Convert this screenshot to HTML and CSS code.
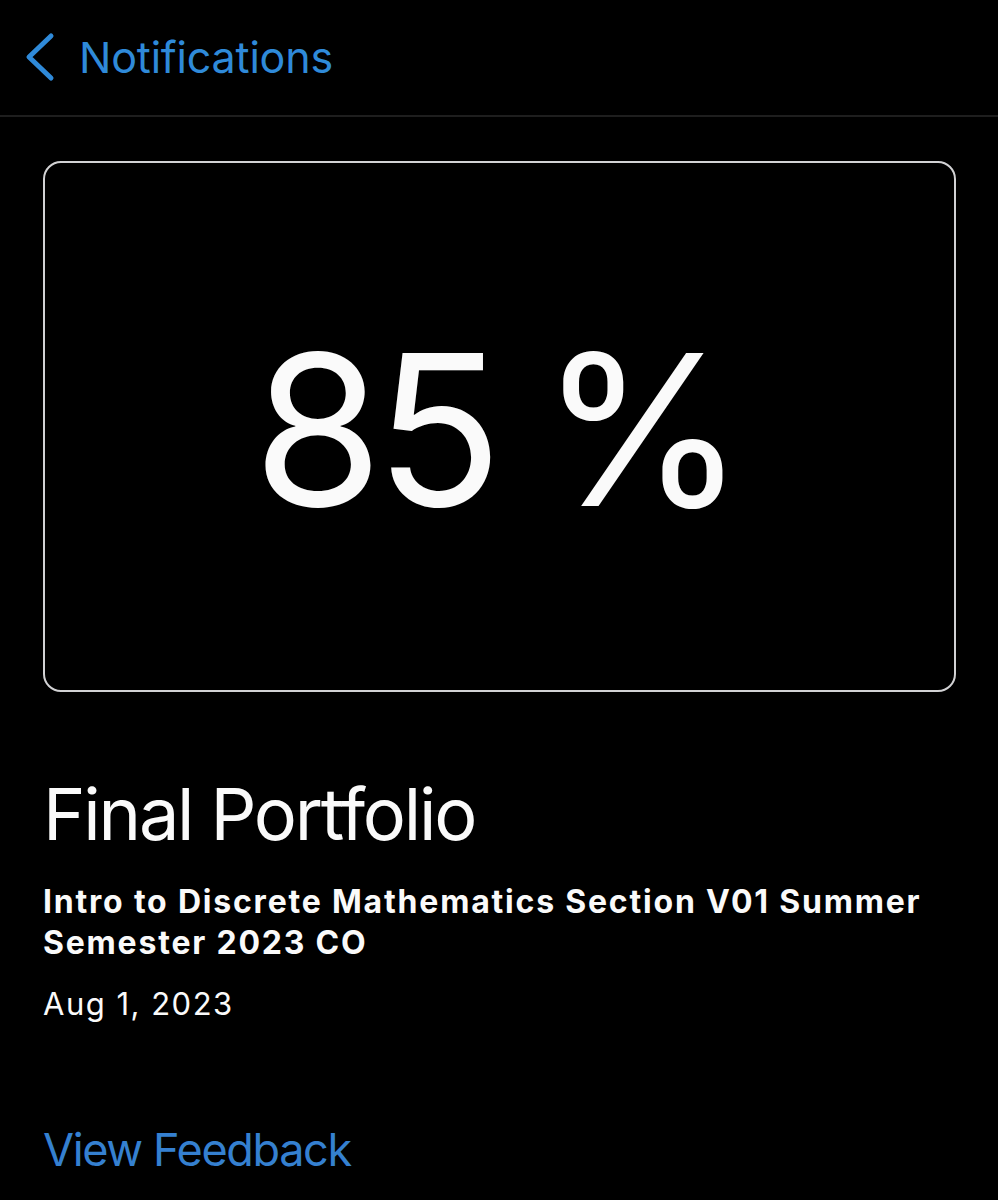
FILE: index.html
```html
<!DOCTYPE html>
<html lang="en">
<head>
<meta charset="utf-8">
<title>Final Portfolio</title>
<link rel="stylesheet" href="styles.css">
</head>
<body>
<header class="nav">
  <a class="back" href="#">
    <svg class="chevron" width="30" height="50" viewBox="0 0 30 50" aria-hidden="true">
      <path d="M26 4 L4 25 L26 46" fill="none" stroke="#2f8ad9" stroke-width="5" stroke-linecap="round" stroke-linejoin="round"/>
    </svg>
    <span class="back-label">Notifications</span>
  </a>
</header>
<main class="content">
  <section class="score-card">
    <div class="score">85 %</div>
  </section>
  <h1 class="title">Final Portfolio</h1>
  <p class="course">Intro to Discrete Mathematics Section V01 Summer Semester 2023 CO</p>
  <p class="date">Aug 1, 2023</p>
  <a class="feedback" href="#">View Feedback</a>
</main>
</body>
</html>
```

FILE: styles.css
```css
html, body {
  margin: 0;
  padding: 0;
  background: #000;
}
body {
  font-family: Inter, "Noto Sans", "Liberation Sans", sans-serif;
  color: #fafafa;
  width: 998px;
  height: 1200px;
  overflow: hidden;
}
.nav {
  border-bottom: 2px solid #1e1e1e;
  display: flex;
  align-items: center;
  padding-left: 25px;
  box-sizing: border-box;
  height: 117px;
}
.back {
  display: flex;
  align-items: center;
  text-decoration: none;
  color: #2f8ad9;
  margin-top: -2px;
}
.chevron {
  display: block;
}
.back-label {
  margin-left: 24px;
  font-size: 43px;
  line-height: 52px;
  letter-spacing: -0.2px;
}
.content {
  padding: 0 42px 0 43px;
}
.score-card {
  margin-top: 44px;
  height: 531px;
  box-sizing: border-box;
  border: 2px solid #d2d2d4;
  border-radius: 18px;
  display: flex;
  align-items: center;
  justify-content: center;
}
.score {
  font-size: 210px;
  line-height: 1;
  font-weight: 400;
  letter-spacing: -8px;
  word-spacing: -6px;
  margin-left: -8px;
  margin-top: 6px;
}
.title {
  margin: 79px 0 0;
  font-size: 72px;
  line-height: 86px;
  font-weight: 400;
  letter-spacing: -2.2px;
}
.course {
  margin: 24px 0 0;
  font-size: 32px;
  line-height: 41px;
  font-weight: 700;
  letter-spacing: 1.8px;
}
.date {
  margin: 23px 0 0;
  font-size: 31px;
  line-height: 36px;
  letter-spacing: 1.5px;
}
.feedback {
  display: block;
  margin-top: 101px;
  font-size: 45px;
  line-height: 54px;
  letter-spacing: -1.35px;
  color: #3580d0;
  text-decoration: none;
}
```
